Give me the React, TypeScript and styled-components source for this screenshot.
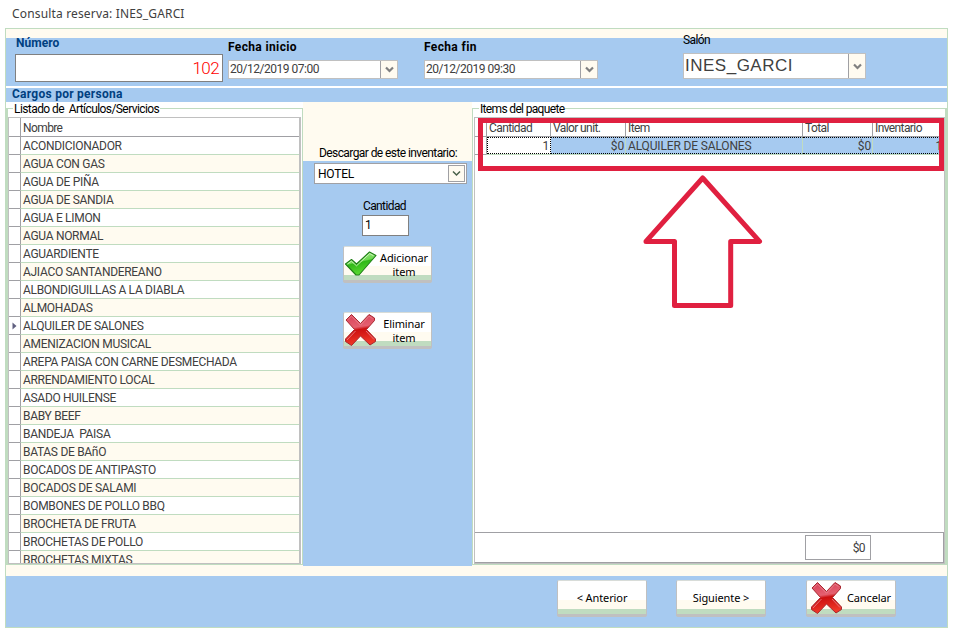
import React from 'react';
import styled, { createGlobalStyle } from 'styled-components';

const BLUE = '#a6caf0';
const CREAM = '#fffbf0';
const GREEN = '#c0dcc0';
const SILVER = '#c0c0c0';
const GRAY = '#a0a0a4';
const RED = '#e02040';

const articulos = [
  'ACONDICIONADOR',
  'AGUA CON GAS',
  'AGUA DE PIÑA',
  'AGUA DE SANDIA',
  'AGUA E LIMON',
  'AGUA NORMAL',
  'AGUARDIENTE',
  'AJIACO SANTANDEREANO',
  'ALBONDIGUILLAS A LA DIABLA',
  'ALMOHADAS',
  'ALQUILER DE SALONES',
  'AMENIZACION MUSICAL',
  'AREPA PAISA CON CARNE DESMECHADA',
  'ARRENDAMIENTO LOCAL',
  'ASADO HUILENSE',
  'BABY BEEF',
  'BANDEJA  PAISA',
  'BATAS DE BAñO',
  'BOCADOS DE ANTIPASTO',
  'BOCADOS DE SALAMI',
  'BOMBONES DE POLLO BBQ',
  'BROCHETA DE FRUTA',
  'BROCHETAS DE POLLO',
  'BROCHETAS MIXTAS',
];

const GlobalStyle = createGlobalStyle`
  * {
    box-sizing: border-box;
  }
  body {
    margin: 0;
    background: #fff;
    overflow: hidden;
    font: 12px/14px Roboto, sans-serif;
    letter-spacing: -0.6px;
    color: #000;
    white-space: pre;
  }
`;

// WINDOW

const Window = styled.div`
  width: 953px;
  height: 629px;
  overflow: hidden;
`;

const Title = styled.div`
  height: 28px;
  padding: 5px 0 0 12px;
  font: 12px/17px 'Noto Sans', sans-serif;
  letter-spacing: 0.16px;
  color: #404040;
`;

const Frame = styled.div`
  width: 943px;
  height: 600px;
  margin-left: 5px;
  border: 1px solid ${GREEN};
  background: ${CREAM};
  display: flex;
  flex-direction: column;
`;

// HEADER

const Header = styled.div`
  height: 48px;
  margin-top: 9px;
  flex-shrink: 0;
  background: ${BLUE};
  display: flex;
  align-items: flex-start;
`;

const Field = styled.div<{ $left: number; $top: number; $width: number }>`
  width: ${(p) => p.$width}px;
  margin-left: ${(p) => p.$left}px;
  padding-top: ${(p) => p.$top}px;
  flex-shrink: 0;
`;

const FieldLabel = styled.div<{ $height: number; $line?: number; $track?: number }>`
  height: ${(p) => p.$height}px;
  line-height: ${(p) => p.$line ?? 14}px;
  letter-spacing: ${(p) => p.$track ?? -0.6}px;
`;

const BoldLabel = styled(FieldLabel)<{ $navy?: boolean }>`
  font-weight: 700;
  padding-left: ${(p) => (p.$navy ? 1 : 0)}px;
  color: ${(p) => (p.$navy ? '#004080' : '#000')};
`;

const NumberBox = styled.div`
  height: 28px;
  border: 1px solid #808080;
  background: #fff;
  padding-right: 3px;
  text-align: right;
  font-size: 17px;
  font-weight: 300;
  line-height: 26px;
  letter-spacing: -0.6px;
  color: #f00;
`;

const Picker = styled.div<{ $large?: boolean }>`
  height: ${(p) => (p.$large ? 26 : 19)}px;
  border: 1px solid ${SILVER};
  background: #fff;
  display: flex;
  color: #404040;
  line-height: ${(p) => (p.$large ? 23 : 17)}px;
  font-family: ${(p) => (p.$large ? "'Liberation Sans'" : 'Roboto')}, sans-serif;
  font-size: ${(p) => (p.$large ? 17 : 12)}px;
  letter-spacing: ${(p) => (p.$large ? 0.5 : -0.48)}px;
`;

const PickerText = styled.span`
  flex: 1;
  padding-left: 1px;
`;

const PickerButton = styled.span`
  width: 17px;
  border-left: 1px solid ${GRAY};
  background: ${CREAM};
  display: flex;
  align-items: center;
  justify-content: center;
`;

const SectionBar = styled.div`
  height: 16px;
  flex-shrink: 0;
  border-top: 2px solid #fff;
  padding-left: 6px;
  background: ${BLUE};
  font-weight: 700;
  line-height: 13px;
  letter-spacing: 0.26px;
  color: #004080;
`;

// BODY

const Body = styled.div`
  height: 464px;
  flex-shrink: 0;
  display: flex;
`;

const Panel = styled.div<{ $width: number }>`
  width: ${(p) => p.$width}px;
  height: 463px;
  background: #fff;
  padding-top: 6px;
`;

const Group = styled.div<{ $edge: 'left' | 'right' }>`
  height: 457px;
  border: 1px solid ${GREEN};
  border-${(p) => p.$edge}-width: 2px;
  padding-${(p) => (p.$edge === 'left' ? 'right' : 'left')}: 1px;
`;

const Legend = styled.div<{ $track: number }>`
  height: 8px;
  margin-left: 5px;
  letter-spacing: ${(p) => p.$track}px;
`;

const LegendText = styled.span`
  position: relative;
  top: -7px;
  padding: 0 1px;
  background: #fff;
`;

const Grid = styled.div`
  height: 447px;
  border: 1px solid ${SILVER};
  background: #fff;
  color: #404040;
  overflow: hidden;
`;

const ArticleGrid = styled(Grid)`
  border-right: 2px solid ${SILVER};
`;

const HeadRow = styled.div`
  display: flex;
  height: 19px;
  border-bottom: 1px solid ${GRAY};
  line-height: 21px;
`;

const HeadCell = styled.div<{ $width?: number }>`
  width: ${(p) => (p.$width ? `${p.$width}px` : 'auto')};
  flex: ${(p) => (p.$width ? 'none' : 1)};
  border-left: 1px solid ${GRAY};
  padding-left: 2px;
`;

const Indicator = styled.div<{ $line?: boolean }>`
  width: 11px;
  flex-shrink: 0;
  display: flex;
  align-items: center;
  justify-content: center;
  background: #fff;
  border-bottom: ${(p) => (p.$line ? `1px solid ${GRAY}` : 'none')};
`;

const ArticleRow = styled.div`
  display: flex;
  height: 18px;
  &:nth-child(odd) {
    background: ${CREAM};
  }
`;

const ArticleName = styled.div`
  flex: 1;
  border-left: 1px solid ${GRAY};
  border-bottom: 1px solid ${GREEN};
  padding-left: 2px;
  line-height: 19px;
  letter-spacing: -0.3px;
`;

// MIDDLE COLUMN

const Middle = styled.div`
  width: 169px;
  height: 464px;
  padding-top: 44px;
  background: linear-gradient(${CREAM} 59px, ${BLUE} 59px);
  display: flex;
  flex-direction: column;
  align-items: center;
`;

const ComboLabel = styled.div`
  height: 17px;
  margin-left: 1px;
  letter-spacing: -0.58px;
`;

const Combo = styled.div`
  width: 153px;
  height: 21px;
  margin-left: 6px;
  border: 1px solid ${GRAY};
  background: #fff;
  padding: 1px 1px 1px 3px;
  display: flex;
  justify-content: space-between;
  line-height: 18px;
  letter-spacing: -0.2px;
`;

const ComboButton = styled.span`
  width: 17px;
  height: 17px;
  border: 1px solid ${GRAY};
  background: ${CREAM};
  display: flex;
  align-items: center;
  justify-content: center;
`;

const QuantityLabel = styled.div`
  margin-top: 15px;
  height: 16px;
  margin-right: 6px;
`;

const QuantityInput = styled.div`
  width: 47px;
  height: 21px;
  margin-right: 4px;
  border: 1px solid #808080;
  background: #fff;
  padding-left: 2px;
  line-height: 18px;
`;

const Button = styled.div<{ $left?: number; $pad?: number }>`
  width: 90px;
  height: 37px;
  margin-left: ${(p) => p.$left ?? 0}px;
  padding-left: ${(p) => p.$pad ?? 0}px;
  flex-shrink: 0;
  border: 1px solid ${SILVER};
  border-bottom-width: 3px;
  border-top-color: #d8dcd8;
  border-radius: 2px;
  background: linear-gradient(#fff 58%, ${CREAM} 58%, ${CREAM} 84%, ${GREEN} 84%);
  display: flex;
  align-items: center;
  justify-content: center;
  text-align: center;
  font: 11px/14px 'Noto Sans', sans-serif;
  letter-spacing: -0.1px;
  & > svg {
    flex-shrink: 0;
  }
`;

const ActionButton = styled(Button)<{ $top: number }>`
  width: 89px;
  margin: ${(p) => p.$top}px 0 0 0;
`;

const ButtonText = styled.span<{ $low?: boolean }>`
  flex: 1;
  margin-top: ${(p) => (p.$low ? 2 : 1)}px;
`;

// PACKAGE ITEMS

const PackageGrid = styled(Grid)`
  display: flex;
  flex-direction: column;
`;

const ItemRow = styled.div`
  display: flex;
  height: 18px;
`;

const SelectedCells = styled.div`
  flex: 1;
  display: flex;
  border-left: 1px solid ${GRAY};
  border-bottom: 1px solid ${GREEN};
`;

const Cell = styled.div<{ $width?: number; $active?: boolean; $right?: boolean }>`
  width: ${(p) => (p.$width ? `${p.$width}px` : 'auto')};
  flex: ${(p) => (p.$width ? 'none' : 1)};
  height: 17px;
  border: 1px dotted #000;
  border-left: ${(p) => (p.$active ? '1px dotted #000' : 'none')};
  border-right: ${(p) => (p.$active ? '1px dotted #000' : `1px solid ${GREEN}`)};
  background: ${(p) => (p.$active ? '#fff' : BLUE)};
  padding: 0 1px 0 2px;
  text-align: ${(p) => (p.$right ? 'right' : 'left')};
  line-height: 16px;
  letter-spacing: -0.15px;
`;

const Summary = styled.div`
  height: 31px;
  margin-top: auto;
  border: 1px solid ${GRAY};
  border-left: none;
  padding: 2px 72px 0 0;
  display: flex;
  justify-content: flex-end;
`;

const SummaryTotal = styled.div`
  width: 66px;
  height: 25px;
  border: 1px solid ${GRAY};
  padding-right: 5px;
  text-align: right;
  line-height: 24px;
`;

const Footer = styled.div`
  height: 51px;
  margin-top: auto;
  background: ${BLUE};
  display: flex;
  padding-top: 4px;
`;

// ANNOTATIONS

const Highlight = styled.div`
  position: absolute;
  left: 478px;
  top: 118px;
  width: 466px;
  height: 53px;
  border: 5px solid ${RED};
`;

const ArrowMark = styled.svg`
  position: absolute;
  left: 640px;
  top: 170px;
`;

const Chevron = ({ dark }: { dark?: boolean }) => (
  <svg width='9' height='7' viewBox='0 0 9 7'>
    <path
      d='M1 1.5 L4.5 5 L8 1.5'
      fill='none'
      stroke={dark ? '#486048' : '#808080'}
      strokeWidth={dark ? 1.5 : 2.2}
    />
  </svg>
);

const CheckIcon = () => (
  <svg width='33' height='28' viewBox='0 0 33 28'>
    <defs>
      <linearGradient id='check' x1='0' y1='0' x2='0.3' y2='1'>
        <stop offset='0' stopColor='#b4ec9c' />
        <stop offset='0.5' stopColor='#6cd850' />
        <stop offset='0.55' stopColor='#30b818' />
        <stop offset='1' stopColor='#58d830' />
      </linearGradient>
    </defs>
    <path
      d='M1.5 14 L7.5 9.5 L12.5 14 L25.5 2 L32 5.5 L15 25 L12 25 Z'
      fill='url(#check)'
      stroke='#208018'
      strokeWidth='1.1'
      strokeLinejoin='round'
    />
    <path d='M3.5 14 L7.4 11.2 L12.5 15.8 L25.7 3.6 L29.5 5.7' fill='none' stroke='#d0f4c0' strokeWidth='0.9' />
  </svg>
);

const CrossIcon = () => (
  <svg width='33' height='34' viewBox='0 0 33 34'>
    <defs>
      <linearGradient id='cross' x1='0' y1='0' x2='0.15' y2='1'>
        <stop offset='0' stopColor='#d84058' />
        <stop offset='0.45' stopColor='#e46070' />
        <stop offset='0.54' stopColor='#cc1010' />
        <stop offset='1' stopColor='#f03828' />
      </linearGradient>
    </defs>
    <path
      d='M2 7 L7.5 1.5 L16.5 10.5 L25 1.5 L30.5 5 L30.5 7.5 L22.5 16.5 L31.5 26 L31.5 28.5 L26 32 L16.5 23 L7.5 32.5 L1.5 28.5 L1.5 26 L10.5 16.5 Z'
      fill='url(#cross)'
      stroke='#a82830'
      strokeWidth='1'
      strokeLinejoin='round'
    />
    <path
      d='M3.5 7 L7.5 3.2 L16.5 12.2 L25 3.2 L28.5 5.5 M3 27 L11.5 18 M22 18 L30 26.5'
      fill='none'
      stroke='#e88890'
      strokeWidth='0.8'
    />
  </svg>
);

const RowMarker = () => (
  <svg width='5' height='8' viewBox='0 0 5 8'>
    <path d='M0.5 0.5 L4.5 4 L0.5 7.5 Z' fill='#606080' />
  </svg>
);

const DateField = ({ label, value, width, left }: any) => (
  <Field $left={left} $top={2} $width={width}>
    <BoldLabel $height={20} $track={0.36}>
      {label}
    </BoldLabel>
    <Picker>
      <PickerText>{value}</PickerText>
      <PickerButton>
        <Chevron />
      </PickerButton>
    </Picker>
  </Field>
);

const App = () => {
  return (
    <Window>
      <GlobalStyle />
      <Title>Consulta reserva: INES_GARCI</Title>
      <Frame>
        <Header>
          <Field $left={9} $top={0} $width={208}>
            <BoldLabel $height={16} $line={11} $navy $track={0.05}>
              Número
            </BoldLabel>
            <NumberBox>102</NumberBox>
          </Field>
          <DateField label='Fecha inicio' value='20/12/2019 07:00' width={170} left={5} />
          <DateField label='Fecha fin' value='20/12/2019 09:30' width={174} left={26} />
          <Field $left={85} $top={0} $width={183}>
            <FieldLabel $height={15} $line={5}>
              Salón
            </FieldLabel>
            <Picker $large>
              <PickerText>INES_GARCI</PickerText>
              <PickerButton>
                <Chevron />
              </PickerButton>
            </Picker>
          </Field>
        </Header>
        <SectionBar>Cargos por persona</SectionBar>

        <Body>
          <Panel $width={297}>
            <Group $edge='left'>
              <Legend $track={-0.58}>
                <LegendText>Listado de  Artículos/Servicios</LegendText>
              </Legend>
              <ArticleGrid>
                <HeadRow>
                  <Indicator />
                  <HeadCell>Nombre</HeadCell>
                </HeadRow>
                {articulos.map((name) => (
                  <ArticleRow key={name}>
                    <Indicator $line>{name === 'ALQUILER DE SALONES' && <RowMarker />}</Indicator>
                    <ArticleName>{name}</ArticleName>
                  </ArticleRow>
                ))}
              </ArticleGrid>
            </Group>
          </Panel>

          <Middle>
            <ComboLabel>Descargar de este inventario:</ComboLabel>
            <Combo>
              HOTEL
              <ComboButton>
                <Chevron dark />
              </ComboButton>
            </Combo>
            <QuantityLabel>Cantidad</QuantityLabel>
            <QuantityInput>1</QuantityInput>
            <ActionButton $top={10}>
              <CheckIcon />
              <ButtonText $low>{'Adicionar\nitem'}</ButtonText>
            </ActionButton>
            <ActionButton $top={29}>
              <CrossIcon />
              <ButtonText $low>{'Eliminar\nitem'}</ButtonText>
            </ActionButton>
          </Middle>

          <Panel $width={475}>
            <Group $edge='right'>
              <Legend $track={-0.66}>
                <LegendText>Items del paquete</LegendText>
              </Legend>
              <PackageGrid>
                <HeadRow>
                  <Indicator />
                  <HeadCell $width={64}>Cantidad</HeadCell>
                  <HeadCell $width={75}>Valor unit.</HeadCell>
                  <HeadCell $width={177}>Item</HeadCell>
                  <HeadCell $width={70}>Total</HeadCell>
                  <HeadCell>Inventario</HeadCell>
                </HeadRow>
                <ItemRow>
                  <Indicator $line />
                  <SelectedCells>
                    <Cell $width={64} $active $right>
                      1
                    </Cell>
                    <Cell $width={75} $right>
                      $0
                    </Cell>
                    <Cell $width={177}>ALQUILER DE SALONES</Cell>
                    <Cell $width={70} $right>
                      $0
                    </Cell>
                    <Cell $right>1</Cell>
                  </SelectedCells>
                </ItemRow>
                <Summary>
                  <SummaryTotal>$0</SummaryTotal>
                </Summary>
              </PackageGrid>
            </Group>
          </Panel>
        </Body>

        <Footer>
          <Button $left={551}>
            <ButtonText>{'< Anterior'}</ButtonText>
          </Button>
          <Button $left={29}>
            <ButtonText>{'Siguiente >'}</ButtonText>
          </Button>
          <Button $left={40} $pad={3}>
            <CrossIcon />
            <ButtonText>Cancelar</ButtonText>
          </Button>
        </Footer>
      </Frame>

      <Highlight />
      <ArrowMark width='125' height='142' viewBox='640 170 125 142'>
        <path
          d='M702.7 178 L759.5 241.4 H730.7 V305.4 H674.5 V241.4 H646 Z'
          fill='none'
          stroke={RED}
          strokeWidth='5'
          strokeLinejoin='round'
        />
      </ArrowMark>
    </Window>
  );
};

export default App;
